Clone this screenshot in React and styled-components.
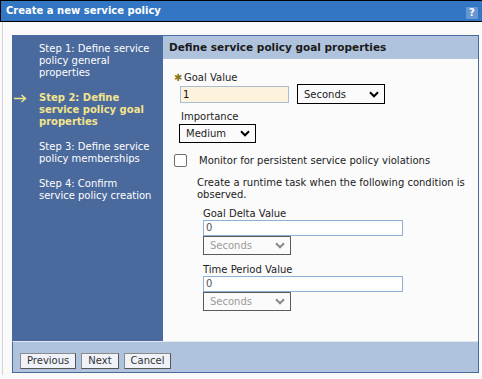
import React from "react";
import styled, { createGlobalStyle } from "styled-components";

const GlobalStyle = createGlobalStyle`
  html, body {
    margin: 0;
    padding: 0;
    background: #fafafa;
  }
  body {
    font-family: "DejaVu Sans", Verdana, sans-serif;
    font-size: 10px;
    color: #222;
  }
`;

const Page = styled.div`
  width: 482px;
  height: 379px;
  overflow: hidden;
`;

const TitleBar = styled.div`
  display: flex;
  align-items: center;
  justify-content: space-between;
  height: 20px;
  padding: 0 4px 0 5px;
  background: #3376c3;
  border: 1px solid #000;
  border-right: none;
`;

const Title = styled.h1`
  margin: 0;
  font-size: 10px;
  font-weight: bold;
  color: #fff;
  line-height: 20px;
`;

const HelpButton = styled.span`
  display: flex;
  align-items: center;
  justify-content: center;
  width: 12px;
  height: 12px;
  margin-top: 3px;
  background: #6696d3;
  color: #fff;
  font-size: 10px;
  font-weight: bold;
`;

const Body = styled.div`
  margin-left: 2px;
  border-left: 1px solid #d4d4d4;
  padding: 13px 3px 2px 9px;
`;

const Wizard = styled.div`
  display: grid;
  grid-template-columns: 151px 1fr;
  grid-template-rows: 305px 31px;
  border: 1px solid #4a699c;
  border-left: none;
  background: #fbfbfb;
`;

const Nav = styled.nav`
  display: flex;
  flex-direction: column;
  gap: 13px;
  padding: 7px 0 0 2px;
  background: #4a699c;
`;

const Step = styled.div`
  display: grid;
  grid-template-columns: 25px 115px;
  line-height: 12px;
  color: ${(p) => (p.$current ? "#f3e48c" : "#fff")};
  font-weight: ${(p) => (p.$current ? "bold" : "normal")};
`;

const Marker = styled.span`
  display: flex;
  align-items: center;
  height: 12px;
`;

const Panel = styled.section`
  display: flex;
  flex-direction: column;
`;

const PanelHeader = styled.h2`
  margin: 0;
  height: 23px;
  box-sizing: border-box;
  padding: 4px 0 0 6px;
  background: #b0c3dc;
  font-size: 10.5px;
  font-weight: bold;
  line-height: 14px;
  color: #1a1a1a;
`;

const Form = styled.div`
  display: flex;
  flex-direction: column;
  padding: 13px 0 0 11px;
`;

const Label = styled.div`
  line-height: 12px;
  padding-left: ${(p) => p.$indent || 0}px;
  margin-top: ${(p) => p.$top || 0}px;
  color: #222;
`;

const Required = styled.span`
  display: inline-block;
  width: 10px;
  color: #8a7a1c;
  font-size: 10px;
`;

const FieldRow = styled.div`
  display: flex;
  align-items: center;
  gap: 8px;
  height: 20px;
  padding-left: ${(p) => p.$indent || 0}px;
`;

const TextInput = styled.div`
  box-sizing: border-box;
  width: ${(p) => p.$width}px;
  height: ${(p) => p.$height}px;
  padding-left: 2px;
  border: 1px solid ${(p) => (p.$required ? "#a9bdd3" : "#8db0d3")};
  background: ${(p) => (p.$required ? "#fdf3dc" : "#fff")};
  color: ${(p) => (p.$required ? "#111" : "#555")};
  line-height: ${(p) => p.$height - 2}px;
`;

const SelectBox = styled.div`
  box-sizing: border-box;
  display: flex;
  align-items: center;
  justify-content: space-between;
  width: ${(p) => p.$width}px;
  height: ${(p) => p.$height}px;
  padding: 0 5px 0 6px;
  border: 1px solid ${(p) => (p.$disabled ? "#5a5a5a" : "#000")};
  background: #fbfbfb;
  color: ${(p) => (p.$disabled ? "#9a9a9a" : "#222")};
`;

const CheckRow = styled.label`
  display: flex;
  align-items: center;
  gap: 12px;
  margin-top: 11px;
  line-height: 13px;
`;

const CheckBox = styled.span`
  box-sizing: border-box;
  width: 13px;
  height: 13px;
  border: 1px solid #6e6e6e;
  border-radius: 2px;
  background: #fff;
`;

const Condition = styled.div`
  display: flex;
  flex-direction: column;
  width: 275px;
  margin: 10px 0 0 23px;
`;

const Description = styled.p`
  margin: 0;
  line-height: 12px;
`;

const SubField = styled.div`
  display: flex;
  flex-direction: column;
  padding-left: 6px;
  margin-top: ${(p) => p.$top}px;
`;

const ButtonBar = styled.div`
  grid-column: 1 / -1;
  display: flex;
  gap: 5px;
  padding: 11px 0 0 7px;
  border-top: 1px solid #dfe6ef;
  border-left: 1px solid #4a699c;
  background: #b0c3dc;
`;

const Button = styled.button`
  height: 16px;
  padding: 0 6px;
  border: 1px solid #555;
  border-top-color: #8a8a8a;
  border-left-color: #8a8a8a;
  background: #eff3f9;
  color: #333;
  font-family: inherit;
  font-size: 10px;
  line-height: 14px;
`;

function Chevron({ color }) {
  return (
    <svg width="10" height="7" viewBox="0 0 10 7">
      <polyline points="1,1.3 5,5.3 9,1.3" fill="none" stroke={color} strokeWidth="2" />
    </svg>
  );
}

function Arrow() {
  return (
    <svg width="13" height="9" viewBox="0 0 13 9">
      <path d="M0 4.5 H11.5 M7.5 1 L11.5 4.5 L7.5 8" fill="none" stroke="#f3e48c" strokeWidth="1.5" />
    </svg>
  );
}

function Select({ value, width, height, disabled }) {
  return (
    <SelectBox $width={width} $height={height} $disabled={disabled}>
      <span>{value}</span>
      <Chevron color={disabled ? "#8a8a8a" : "#000"} />
    </SelectBox>
  );
}

const steps = [
  "Step 1: Define service policy general properties",
  "Step 2: Define service policy goal properties",
  "Step 3: Define service policy memberships",
  "Step 4: Confirm service policy creation",
];

export default function App() {
  return (
    <Page>
      <GlobalStyle />
      <TitleBar>
        <Title>Create a new service policy</Title>
        <HelpButton>?</HelpButton>
      </TitleBar>
      <Body>
        <Wizard>
          <Nav>
            {steps.map((s, i) => (
              <Step key={s} $current={i === 1}>
                <Marker>{i === 1 ? <Arrow /> : null}</Marker>
                <span>{s}</span>
              </Step>
            ))}
          </Nav>
          <Panel>
            <PanelHeader>Define service policy goal properties</PanelHeader>
            <Form>
              <Label>
                <Required>✱</Required>Goal Value
              </Label>
              <FieldRow $indent={6}>
                <TextInput $width={109} $height={17} $required>1</TextInput>
                <Select value="Seconds" width={88} height={20} />
              </FieldRow>
              <Label $indent={7} $top={7}>Importance</Label>
              <FieldRow $indent={5}>
                <Select value="Medium" width={77} height={19} />
              </FieldRow>
              <CheckRow>
                <CheckBox />
                Monitor for persistent service policy violations
              </CheckRow>
              <Condition>
                <Description>
                  Create a runtime task when the following condition is observed.
                </Description>
                <SubField $top={7}>
                  <Label>Goal Delta Value</Label>
                  <TextInput $width={200} $height={16}>0</TextInput>
                  <Select value="Seconds" width={88} height={19} disabled />
                </SubField>
                <SubField $top={9}>
                  <Label>Time Period Value</Label>
                  <TextInput $width={200} $height={16}>0</TextInput>
                  <Select value="Seconds" width={88} height={19} disabled />
                </SubField>
              </Condition>
            </Form>
          </Panel>
          <ButtonBar>
            <Button>Previous</Button>
            <Button>Next</Button>
            <Button>Cancel</Button>
          </ButtonBar>
        </Wizard>
      </Body>
    </Page>
  );
}
